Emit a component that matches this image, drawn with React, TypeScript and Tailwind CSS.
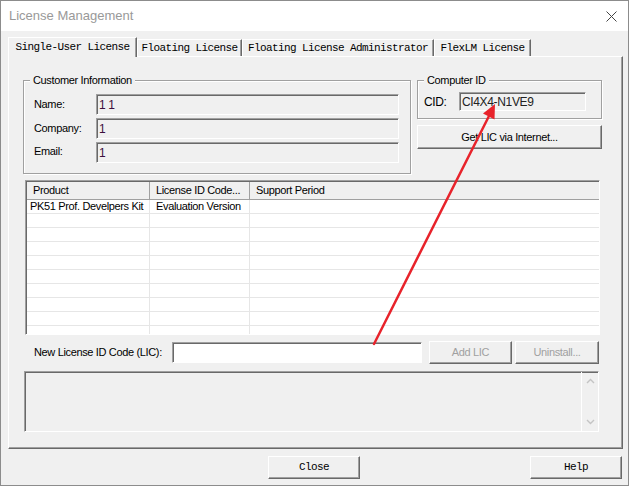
import React from 'react'

const raised =
  'border border-t-white border-l-white border-r-[#696969] border-b-[#696969] shadow-[inset_-1px_-1px_0_#a0a0a0]'
const sunken =
  'border border-t-[#a0a0a0] border-l-[#a0a0a0] border-r-white border-b-white shadow-[inset_1px_1px_0_#696969]'
const etched = 'border border-[#a0a0a0] shadow-[inset_1px_1px_0_#fff,1px_1px_0_#fff]'
const mono = "font-['Liberation_Mono',monospace] text-[11px] tracking-[-0.6px]"

const tabs = [
  { label: 'Single-User License', w: 'w-[129px]', active: true },
  { label: 'Floating License', w: 'w-[105px]', active: false },
  { label: 'Floating License Administrator', w: 'w-[192px]', active: false },
  { label: 'FlexLM License', w: 'w-[97px]', active: false },
]

const customer = [
  { label: 'Name:', value: '1 1' },
  { label: 'Company:', value: '1' },
  { label: 'Email:', value: '1' },
]

function GroupBox({ title, className, children }: { title: string; className: string; children: React.ReactNode }) {
  return (
    <div className={`relative ${etched} ${className}`}>
      <span className="absolute -top-[8px] left-[6px] bg-[#f0f0f0] px-[3px] leading-[14px]">{title}</span>
      {children}
    </div>
  )
}

export default function App() {
  const emptyRows = Array.from({ length: 9 })

  return (
    <div className="relative flex h-[486px] w-[629px] flex-col overflow-hidden border border-[#8c8c8c] bg-[#f0f0f0] font-['Liberation_Sans',Arial,sans-serif] text-[11px] tracking-[-0.35px] text-black">
      {/* Title bar */}
      <div className="flex h-[30px] shrink-0 items-center justify-between bg-white pl-[8px] pr-[10px]">
        <span className="text-[13px] tracking-normal text-[#999]">License Management</span>
        <svg width="11" height="11" viewBox="0 0 11 11" className="mr-[1px]">
          <path d="M0.5 0.5 L10.5 10.5 M10.5 0.5 L0.5 10.5" stroke="#444" strokeWidth="1" />
        </svg>
      </div>

      {/* Tabs */}
      <div className="flex h-[25px] shrink-0 items-end pl-[7px]">
        {tabs.map((t) => (
          <div
            key={t.label}
            className={`${t.w} ${mono} flex items-center justify-center border-t border-l border-r border-t-white border-l-white border-r-[#696969] shadow-[inset_-1px_0_0_#a0a0a0] ${
              t.active ? 'relative z-10 -mb-px h-[20px] bg-[#f0f0f0] pb-[1px]' : 'h-[17px] pt-[1px]'
            }`}
          >
            {t.label}
          </div>
        ))}
      </div>

      {/* Tab page */}
      <div className={`ml-[7px] h-[393px] w-[615px] shrink-0 ${raised}`}>
        <div className="ml-[14px] mt-[23px] flex gap-[6px]">
          <GroupBox title="Customer Information" className="h-[94px] w-[388px]">
            <div className="flex flex-col gap-[3px] pl-[10px] pt-[13px]">
              {customer.map((c) => (
                <div key={c.label} className="flex h-[21px] items-center">
                  <span className={`w-[62px] ${c.label === 'Email:' ? '-mt-[3px]' : ''}`}>{c.label}</span>
                  <div className={`flex h-[21px] w-[303px] items-center pl-[2px] text-[12px] text-[#3c0f3c] ${sunken}`}>
                    {c.value}
                  </div>
                </div>
              ))}
            </div>
          </GroupBox>

          <div className="flex w-[185px] flex-col">
            <GroupBox title="Computer ID" className="h-[39px]">
              <div className="flex items-center pl-[6px] pt-[11px]">
                <span className="w-[35px] text-[12px]">CID:</span>
                <div className={`flex h-[19px] w-[127px] items-center pl-[2px] text-[12px] text-[#222] ${sunken}`}>
                  CI4X4-N1VE9
                </div>
              </div>
            </GroupBox>
            <button className={`mt-[6px] h-[24px] w-full bg-[#f0f0f0] text-[11px] ${raised}`}>Get LIC via Internet...</button>
          </div>
        </div>

        {/* License list */}
        <div className={`ml-[16px] mt-[6px] flex h-[155px] w-[575px] flex-col overflow-hidden bg-white ${sunken}`}>
          <div className="mt-[1px] ml-[1px] flex h-[18px] shrink-0 border-b border-[#a0a0a0] bg-[#f0f0f0]">
            <div className="flex w-[123px] items-center border-r border-[#a0a0a0] pl-[6px]">Product</div>
            <div className="flex w-[100px] items-center border-r border-[#a0a0a0] pl-[6px]">License ID Code...</div>
            <div className="flex flex-1 items-center pl-[6px]">Support Period</div>
          </div>
          <div className="ml-[1px] flex h-[14px] border-b border-[#e6e6e6]">
            <div className="flex w-[123px] items-center border-r border-[#e6e6e6] pl-[3px] whitespace-nowrap">PK51 Prof. Develpers Kit</div>
            <div className="flex w-[100px] items-center border-r border-[#e6e6e6] pl-[6px]">Evaluation Version</div>
            <div className="flex-1" />
          </div>
          {emptyRows.map((_, i) => (
            <div key={i} className="ml-[1px] flex h-[14px] shrink-0 border-b border-[#e6e6e6]">
              <div className="w-[123px] border-r border-[#e6e6e6]" />
              <div className="w-[100px] border-r border-[#e6e6e6]" />
              <div className="flex-1" />
            </div>
          ))}
        </div>

        {/* New LIC */}
        <div className="ml-[25px] mt-[6px] flex h-[23px] items-center">
          <span className="w-[138px]">New License ID Code (LIC):</span>
          <div className={`h-[21px] w-[250px] bg-white ${sunken}`} />
          <button className={`ml-[7px] h-[23px] w-[83px] bg-[#f0f0f0] text-[11px] text-[#a0a0a0] ${raised}`}>Add LIC</button>
          <button className={`ml-[3px] h-[23px] w-[84px] bg-[#f0f0f0] text-[11px] text-[#a0a0a0] ${raised}`}>Uninstall...</button>
        </div>

        {/* Messages */}
        <div className={`ml-[15px] mt-[7px] flex h-[61px] w-[575px] ${sunken}`}>
          <div className="flex-1" />
          <div className="flex w-[17px] flex-col items-center justify-between border-l border-white py-[6px]">
            <svg width="9" height="6" viewBox="0 0 9 6">
              <path d="M1 5 L4.5 1.5 L8 5" fill="none" stroke="#c4c4c4" strokeWidth="1.4" />
            </svg>
            <svg width="9" height="6" viewBox="0 0 9 6">
              <path d="M1 1 L4.5 4.5 L8 1" fill="none" stroke="#c4c4c4" strokeWidth="1.4" />
            </svg>
          </div>
        </div>
      </div>

      {/* Dialog buttons */}
      <div className="mt-[7px] flex">
        <button className={`ml-[267px] h-[23px] w-[92px] bg-[#f0f0f0] ${mono} ${raised}`}>Close</button>
        <button className={`ml-[170px] h-[23px] w-[92px] bg-[#f0f0f0] ${mono} ${raised}`}>Help</button>
      </div>

      {/* Red annotation arrow */}
      <svg className="pointer-events-none absolute -left-px -top-px" width="629" height="486" viewBox="0 0 629 486">
        <line x1="374" y1="344" x2="489" y2="116" stroke="#e8232b" strokeWidth="2.5" strokeLinecap="round" />
        <polygon points="495,104 494.5,119.5 483,113.5" fill="#e8232b" />
      </svg>
    </div>
  )
}
